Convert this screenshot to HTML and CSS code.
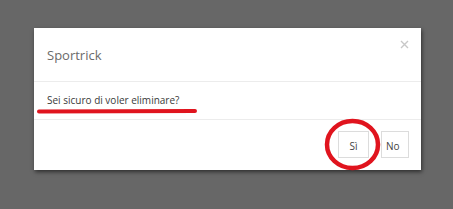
FILE: index.html
```html
<!DOCTYPE html>
<html>
<head>
<meta charset="utf-8">
<link rel="stylesheet" href="styles.css">
</head>
<body>
<div class="modal">
  <div class="modal-header">
    <h4 class="modal-title">Sportrick</h4>
    <svg class="close" width="9" height="9" viewBox="0 0 9 9"><path d="M1 1 L8 8 M8 1 L1 8" stroke="#c8c8c8" stroke-width="1.4" fill="none"/></svg>
  </div>
  <div class="modal-body">Sei sicuro di voler eliminare?</div>
  <div class="modal-footer">
    <button class="btn btn-yes">Sì</button>
    <button class="btn btn-no">No</button>
  </div>
</div>
<svg class="annot" width="453" height="209" viewBox="0 0 453 209">
  <line x1="39" y1="111.5" x2="195" y2="111" stroke="#e0141e" stroke-width="4" stroke-linecap="round"/>
  <ellipse cx="352.5" cy="144.5" rx="25.5" ry="23.5" stroke="#e0141e" stroke-width="4.5" fill="none"/>
</svg>
</body>
</html>
```
FILE: styles.css
```css
html, body {
  margin: 0;
  padding: 0;
}
body {
  width: 453px;
  height: 209px;
  background: #676767;
  font-family: "Open Sans", "DejaVu Sans", sans-serif;
  overflow: hidden;
  position: relative;
}
.modal {
  margin: 28px 0 0 34px;
  width: 387px;
  height: 142px;
  box-sizing: border-box;
  background: #fff;
  box-shadow: 1px 2px 4px rgba(0,0,0,0.55);
  display: flex;
  flex-direction: column;
}
.modal-header {
  height: 54px;
  box-sizing: border-box;
  padding: 18px 12px 0 13px;
  border-bottom: 1px solid #ececec;
  display: flex;
  justify-content: space-between;
  align-items: flex-start;
}
.modal-title {
  margin: 0;
  font-size: 13px;
  line-height: 18px;
  font-weight: 400;
  color: #6a6a6a;
}
.close {
  margin-top: -6px;
  margin-right: 0px;
  display: block;
}
.modal-body {
  height: 38px;
  box-sizing: border-box;
  padding: 11px 13px 0;
  font-size: 10px;
  line-height: 14px;
  color: #3a3a3a;
  border-bottom: 1px solid #ececec;
}
.modal-footer {
  flex: 1;
  display: flex;
  justify-content: flex-end;
  align-items: flex-start;
  padding: 11px 12px 0 0;
  gap: 12px;
}
.btn {
  height: 27px;
  box-sizing: border-box;
  border: 1px solid #dcdcdc;
  background: #fff;
  font-family: "Open Sans", "DejaVu Sans", sans-serif;
  font-size: 10px;
  line-height: 14px;
  color: #444;
  padding: 3px 0 0;
  margin: 0;
}
.btn-yes {
  width: 31px;
  text-align: center;
}
.btn-no {
  width: 28px;
  text-align: left;
  padding-left: 4px;
}
.annot {
  position: absolute;
  left: 0;
  top: 0;
  pointer-events: none;
}
```
